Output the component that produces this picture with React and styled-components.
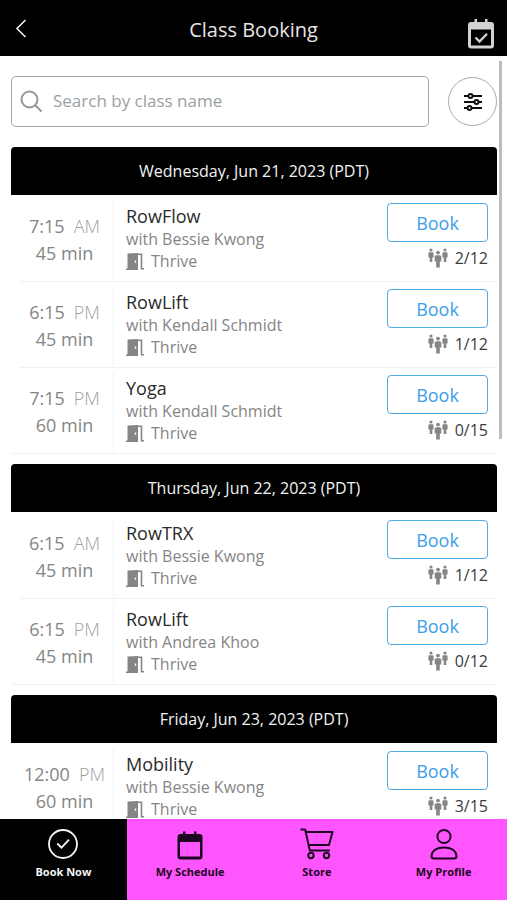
import React, { useState } from "react";
import styled, { createGlobalStyle } from "styled-components";

const GlobalStyle = createGlobalStyle`
  * {
    box-sizing: border-box;
  }
  body {
    margin: 0;
    background-color: #fff;
    font-family: "Open Sans", "Noto Sans", sans-serif;
  }
  button, input {
    font-family: inherit;
  }
  svg {
    display: block;
    flex-shrink: 0;
  }
`

const Screen = styled.div`
  display: flex;
  flex-direction: column;
  height: 100vh;
  background-color: #fff;
`

const TopBar = styled.header`
  display: grid;
  grid-template-columns: 48px 1fr 48px;
  align-items: center;
  flex-shrink: 0;
  height: 56px;
  padding-top: 4px;
  background-color: #000;
`

const TopTitle = styled.h1`
  margin: 0;
  color: #e6e6e6;
  font-size: 20px;
  font-weight: 400;
  line-height: 28px;
  text-align: center;
`

const IconButton = styled.button`
  display: flex;
  align-items: flex-start;
  justify-content: ${props => props.$align};
  height: 48px;
  padding: 13px 13px 0 15px;
  border: none;
  background: none;
  color: #d2d2d2;
  cursor: pointer;
`

const Body = styled.div`
  position: relative;
  flex: 1;
  min-height: 0;
`

const Scroller = styled.main`
  height: 100%;
  padding: 20px 10px 10px 11px;
  overflow-y: auto;
  scrollbar-width: none;
`

const ScrollThumb = styled.div`
  position: absolute;
  top: 5px;
  right: 5px;
  width: 3px;
  height: 49.5%;
  background-color: #bdbdbd;
`

const SearchRow = styled.div`
  display: flex;
  align-items: center;
  gap: 19px;
  margin-bottom: 20px;
`

const SearchBox = styled.label`
  display: flex;
  flex: 1;
  align-items: center;
  gap: 10px;
  height: 51px;
  padding: 0 8px;
  border: 1px solid #a3a8ab;
  border-radius: 5px;
  color: #92989b;
`

const SearchInput = styled.input`
  flex: 1;
  min-width: 0;
  padding: 0 0 2px;
  border: none;
  outline: none;
  background: none;
  color: #333;
  font-size: 17px;
  font-weight: 500;
  line-height: 24px;

  &::placeholder {
    color: #9a9fa2;
    opacity: 1;
  }
`

const FilterButton = styled.button`
  display: flex;
  align-items: center;
  justify-content: center;
  width: 49px;
  height: 49px;
  padding: 0;
  border: 1px solid #a9a9a9;
  border-radius: 50%;
  background-color: #fff;
  color: #111;
  cursor: pointer;
`

const Day = styled.section`
  margin-bottom: 10px;
`

const DayHeader = styled.h2`
  margin: 0;
  border-radius: 4px 4px 0 0;
  background-color: #000;
  color: #f2f2f2;
  font-size: 16px;
  font-weight: 400;
  line-height: 48px;
  text-align: center;
`

const ClassList = styled.ul`
  margin: 0;
  padding: 1px 0 0;
  list-style: none;
`

const ClassRow = styled.li`
  display: flex;
  height: 86px;
  margin-left: 9px;
  border-bottom: 1px solid #eff1f2;

  &:last-child {
    margin-left: 0;
    padding-left: 9px;
  }
`

const TimeCell = styled.div`
  display: flex;
  flex-direction: column;
  justify-content: center;
  flex-shrink: 0;
  width: 94px;
  margin-top: 4px;
  padding: 0 4px 2px 0;
  border-right: 1px solid #f1f4f5;
  color: #858585;
  font-size: 18px;
  line-height: 27px;
  text-align: center;
  white-space: nowrap;
`

const Period = styled.span`
  margin-left: 9px;
  color: #a0a0a0;
  font-weight: 300;
`

const InfoCell = styled.div`
  flex: 1;
  min-width: 0;
  padding: 8px 8px 0 12px;
`

const ClassName = styled.h3`
  margin: 0;
  color: #2b2b2b;
  font-size: 18px;
  font-weight: 400;
  line-height: 24px;
`

const InfoLine = styled.div`
  display: flex;
  align-items: center;
  gap: 7px;
  color: #858585;
  font-size: 16px;
  line-height: 22px;
  white-space: nowrap;
`

const ActionCell = styled.div`
  display: flex;
  flex-direction: column;
  align-items: flex-end;
  padding: 7px 9px 0 0;
`

const BookButton = styled.button`
  width: 101px;
  height: 39px;
  padding: 0;
  border: 1px solid #4fabe3;
  border-radius: 4px;
  background-color: #fff;
  color: #3ba0e6;
  font-size: 18px;
  line-height: 24px;
  cursor: pointer;
`

const Spots = styled.div`
  display: flex;
  align-items: center;
  gap: 7px;
  margin-top: 5px;
  color: #3c3c3c;
  font-size: 16px;
  line-height: 22px;
`

const TabBar = styled.nav`
  display: grid;
  grid-template-columns: repeat(4, 1fr);
  flex-shrink: 0;
  height: 81px;
  background-color: #ff55ff;
`

const Tab = styled.a`
  display: flex;
  flex-direction: column;
  align-items: center;
  gap: 3px;
  padding-top: 9px;
  background-color: ${props => props.$active ? "#000" : "transparent"};
  color: ${props => props.$active ? "#f5f5f5" : "#1c0620"};
  font-size: 11px;
  font-weight: 700;
  line-height: 18px;
  text-decoration: none;
`

const BackIcon = () => (
  <svg width="12" height="20" viewBox="0 0 12 20" fill="none" stroke="#eee" strokeWidth="1.6">
    <path d="M10.500 1 2 9.500l8.500 8.500" />
  </svg>
)

const CalendarCheckIcon = () => (
  <svg width="26" height="30" viewBox="0 0 26 30" fill="none">
    <path d="M6.500 0h2.500v4h-2.500zM17 0h2.500v4H17z" fill="currentColor" />
    <path d="M3 3h20a3 3 0 0 1 3 3v20.500a3 3 0 0 1-3 3H3a3 3 0 0 1-3-3V6a3 3 0 0 1 3-3zm0 7.500v16h20v-16z" fill="currentColor" fillRule="evenodd" />
    <path d="m7.500 18.500 4 4 7.500-7.800" stroke="currentColor" strokeWidth="2.300" />
  </svg>
)

const SearchIcon = () => (
  <svg width="23" height="23" viewBox="0 0 23 23" fill="none" stroke="currentColor" strokeWidth="2">
    <circle cx="9.500" cy="9.500" r="8" />
    <path d="m15 15 6.500 6.500" />
  </svg>
)

const FilterIcon = () => (
  <svg width="20" height="18" viewBox="0 0 20 18" fill="#fff" stroke="currentColor" strokeWidth="2">
    <path d="M1 3h18M1 9h18M1 15h18" />
    <circle cx="7.500" cy="3" r="2" />
    <circle cx="13.500" cy="9" r="2" />
    <circle cx="6.500" cy="15" r="2" />
  </svg>
)

const DoorIcon = () => (
  <svg width="18" height="17" viewBox="0 0 18 17" fill="none">
    <path d="M1.500 .5 12 0v17H0v-1.500h1.500zM8.800 7.500v2.200h1.400V7.500z" fill="#858585" fillRule="evenodd" />
    <path d="M12 1.200h3.500v14.600H18" stroke="#858585" strokeWidth="1.600" />
  </svg>
)

const PeopleIcon = () => (
  <svg width="20" height="20" viewBox="0 0 20 20" fill="#858585">
    <circle cx="3" cy="2" r="1.600" />
    <path d="M1.600 4.200h2.800q1.200 0 1.200 1.200v4H4.300V14H1.700V9.400H.4v-4q0-1.200 1.200-1.200z" />
    <circle cx="17" cy="2" r="1.600" />
    <path d="M15.600 4.200h2.800q1.200 0 1.200 1.200v4h-1.300V14h-2.600V9.400h-1.300v-4q0-1.200 1.200-1.200z" />
    <circle cx="10" cy="4.600" r="1.900" />
    <path d="M8.200 7.200h3.600q1.500 0 1.500 1.500v4.800h-1.500v6H8.200v-6H6.700V8.700q0-1.500 1.500-1.500z" />
  </svg>
)

const CheckCircleIcon = () => (
  <svg width="32" height="32" viewBox="0 0 32 32" fill="none" stroke="currentColor" strokeWidth="1.800">
    <circle cx="16" cy="16" r="14" />
    <path d="m10.200 15.500 4.300 4.200 7.500-8" />
  </svg>
)

const CalendarIcon = () => (
  <svg width="32" height="32" viewBox="0 0 32 32" fill="currentColor">
    <path d="M9 3.500h2.500V8H9zM20 3.500h2.500V8H20z" />
    <path d="M6.500 6h19a3 3 0 0 1 3 3v19.500a3 3 0 0 1-3 3h-19a3 3 0 0 1-3-3V9a3 3 0 0 1 3-3zM6 14v14.500h20V14z" fillRule="evenodd" />
  </svg>
)

const CartIcon = () => (
  <svg width="34" height="32" viewBox="0 0 34 32" fill="none" stroke="currentColor" strokeWidth="2" strokeLinejoin="round">
    <path d="M.5 1.500h4.700L9.800 22.500h20" />
    <path d="M6 4h26.500L29 17H8.800" />
    <circle cx="11" cy="27.500" r="2.700" />
    <circle cx="26.500" cy="27.500" r="2.700" />
  </svg>
)

const ProfileIcon = () => (
  <svg width="32" height="32" viewBox="0 0 32 32" fill="none" stroke="currentColor" strokeWidth="2">
    <circle cx="16" cy="8.500" r="6.600" />
    <path d="M6 30.500q-2.500 0-2.500-2.500C4 22.500 9 19.500 16 19.500S28 22.500 28.500 28q0 2.500-2.500 2.500z" />
  </svg>
)

const days = [
  {
    date: "Wednesday, Jun 21, 2023 (PDT)",
    classes: [
      { time: "7:15", period: "AM", length: "45 min", name: "RowFlow", coach: "Bessie Kwong", spots: "2/12" },
      { time: "6:15", period: "PM", length: "45 min", name: "RowLift", coach: "Kendall Schmidt", spots: "1/12" },
      { time: "7:15", period: "PM", length: "60 min", name: "Yoga", coach: "Kendall Schmidt", spots: "0/15" },
    ],
  },
  {
    date: "Thursday, Jun 22, 2023 (PDT)",
    classes: [
      { time: "6:15", period: "AM", length: "45 min", name: "RowTRX", coach: "Bessie Kwong", spots: "1/12" },
      { time: "6:15", period: "PM", length: "45 min", name: "RowLift", coach: "Andrea Khoo", spots: "0/12" },
    ],
  },
  {
    date: "Friday, Jun 23, 2023 (PDT)",
    classes: [
      { time: "12:00", period: "PM", length: "60 min", name: "Mobility", coach: "Bessie Kwong", spots: "3/15" },
    ],
  },
]

const tabs = [
  { label: "Book Now", Icon: CheckCircleIcon },
  { label: "My Schedule", Icon: CalendarIcon },
  { label: "Store", Icon: CartIcon },
  { label: "My Profile", Icon: ProfileIcon },
]

const ClassItem = ({ item }) => (
  <ClassRow>
    <TimeCell>
      <div>{item.time}<Period>{item.period}</Period></div>
      <div>{item.length}</div>
    </TimeCell>
    <InfoCell>
      <ClassName>{item.name}</ClassName>
      <InfoLine>with {item.coach}</InfoLine>
      <InfoLine><DoorIcon />Thrive</InfoLine>
    </InfoCell>
    <ActionCell>
      <BookButton type="button">Book</BookButton>
      <Spots><PeopleIcon />{item.spots}</Spots>
    </ActionCell>
  </ClassRow>
)

const App = () => {
  const [query, setQuery] = useState("")
  const [activeTab, setActiveTab] = useState("Book Now")

  const matches = item => item.name.toLowerCase().includes(query.toLowerCase())

  return (
    <Screen>
      <GlobalStyle />
      <TopBar>
        <IconButton type="button" aria-label="Back" $align="flex-start"><BackIcon /></IconButton>
        <TopTitle>Class Booking</TopTitle>
        <IconButton type="button" aria-label="My bookings" $align="flex-end"><CalendarCheckIcon /></IconButton>
      </TopBar>
      <Body>
        <Scroller>
          <SearchRow>
            <SearchBox>
              <SearchIcon />
              <SearchInput
                type="text"
                aria-label="Search by class name"
                placeholder="Search by class name"
                value={query}
                onChange={e => setQuery(e.target.value)}
              />
            </SearchBox>
            <FilterButton type="button" aria-label="Filters"><FilterIcon /></FilterButton>
          </SearchRow>
          {days.map(day => (
            <Day key={day.date}>
              <DayHeader>{day.date}</DayHeader>
              <ClassList>
                {day.classes.filter(matches).map(item => <ClassItem key={item.time + item.period} item={item} />)}
              </ClassList>
            </Day>
          ))}
        </Scroller>
        <ScrollThumb />
      </Body>
      <TabBar>
        {tabs.map(({ label, Icon }) => (
          <Tab key={label} href="#" $active={label === activeTab} onClick={() => setActiveTab(label)}>
            <Icon />
            {label}
          </Tab>
        ))}
      </TabBar>
    </Screen>
  )
}

export default App;
